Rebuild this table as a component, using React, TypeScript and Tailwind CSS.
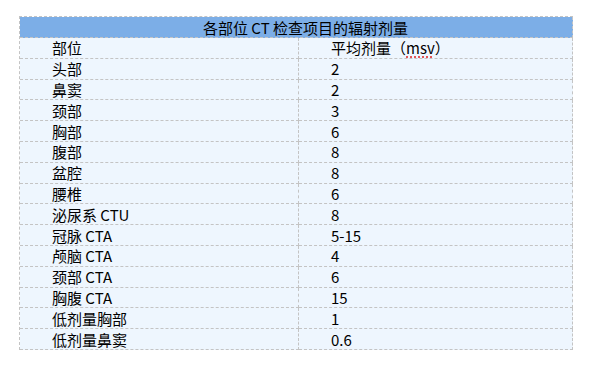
const rows: [string, string][] = [
  ['部位', ''],
  ['头部', '2'],
  ['鼻窦', '2'],
  ['颈部', '3'],
  ['胸部', '6'],
  ['腹部', '8'],
  ['盆腔', '8'],
  ['腰椎', '6'],
  ['泌尿系 CTU', '8'],
  ['冠脉 CTA', '5-15'],
  ['颅脑 CTA', '4'],
  ['颈部 CTA', '6'],
  ['胸腹 CTA', '15'],
  ['低剂量胸部', '1'],
  ['低剂量鼻窦', '0.6'],
];

const cell =
  "flex items-center pl-8 border-r border-b border-dashed border-[#c4c4c4] font-['Noto_Sans_CJK_SC',sans-serif] text-[15px] leading-none";

const App = () => {
  return (
    <div className="w-[591px] h-[371px] bg-white pt-4 pl-[19px]">
      <div className="w-[554px] border-t border-l border-dashed border-[#c4c4c4] text-black">
        <div
          className="flex items-center justify-center h-[21px] pl-[19px] bg-[#7caee7] border-r border-b border-dashed border-[#c4c4c4] font-['Noto_Sans_CJK_SC',sans-serif] text-[15px] leading-none"
        >
          <span>各部位 CT 检查项目的辐射剂量</span>
        </div>
        {rows.map(([part, dose], i) => (
          <div key={i} className="grid grid-cols-[279px_1fr] h-[20.8px] bg-[#eef6fe]">
            <div className={cell}>
              <span>{part}</span>
            </div>
            <div className={cell}>
              {i === 0 ? (
                <span>
                  平均剂量（
                  <span className="underline decoration-dotted decoration-[#e02020] underline-offset-2">
                    msv
                  </span>
                  ）
                </span>
              ) : (
                <span>{dose}</span>
              )}
            </div>
          </div>
        ))}
      </div>
    </div>
  );
};

export default App;
